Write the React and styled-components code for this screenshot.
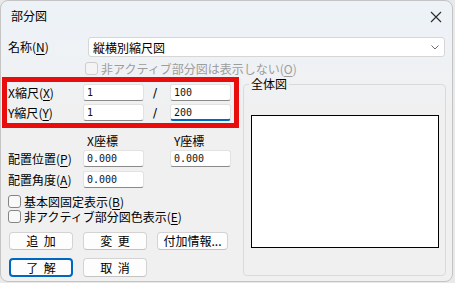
import React from "react";
import styled, { createGlobalStyle, css } from "styled-components";

const Global = createGlobalStyle`
  html, body { margin: 0; padding: 0; background: #e9e9e9; }
  body { font-family: "Noto Sans CJK JP", "Noto Sans", sans-serif; font-size: 12px; color: #000; }
  * { box-sizing: border-box; }
`;

const Dialog = styled.div`
  width: 453px;
  height: 282px;
  border: 1px solid #c4c4c4;
  border-radius: 8px;
  overflow: hidden;
  background: linear-gradient(180deg, #edf2f8 0px, #eff2f5 60px, #f0f0f0 110px);
  display: flex;
  flex-direction: column;
`;

const TitleBar = styled.div`
  height: 29px;
  display: flex;
  align-items: center;
  justify-content: space-between;
  padding: 0 10px 0 10px;
`;

const Title = styled.div`
  font-size: 12px;
  line-height: 14px;
  padding-top: 1px;
`;

const CloseIcon = styled.svg`
  width: 12px;
  height: 12px;
  margin-top: 2px;
`;

const Body = styled.div`
  flex: 1;
  padding: 7px 0 0 1px;
  display: flex;
  flex-direction: column;
`;

const NameRow = styled.div`
  display: grid;
  grid-template-columns: 80px 1fr;
  align-items: center;
  padding: 0 7px 0 6px;
  height: 20px;
`;

const Label = styled.span`
  font-size: 12px;
  line-height: 14px;
  white-space: nowrap;
  color: ${(p) => (p.$disabled ? "#9d9d9d" : "#000")};
  u { text-decoration-thickness: 1px; text-underline-offset: 2px; }
`;

const Combo = styled.div`
  height: 20px;
  background: #fff;
  border: 1px solid #d6d6d6;
  border-radius: 3px;
  display: flex;
  align-items: center;
  justify-content: space-between;
  padding: 0 5px 0 4px;
  font-size: 12px;
`;

const Chevron = styled.svg`
  width: 8px;
  height: 5px;
`;

const CheckRow = styled.label`
  display: flex;
  align-items: center;
  gap: 3px;
  height: 15px;
  margin: ${(p) => p.$margin || "0"};
`;

const Box = styled.span`
  width: 13px;
  height: 13px;
  border-radius: 3px;
  border: 1px solid ${(p) => (p.$disabled ? "#cccccc" : "#858585")};
  background: ${(p) => (p.$disabled ? "#f4f4f4" : "#f8f8f8")};
  flex: none;
`;

const Main = styled.div`
  display: flex;
  gap: 4px;
  margin-top: 1px;
`;

const LeftCol = styled.div`
  width: 237px;
  display: flex;
  flex-direction: column;
`;

const FieldGrid = styled.div`
  display: grid;
  grid-template-columns: 75px 61px 26px 61px;
  grid-auto-rows: 17px;
  row-gap: ${(p) => p.$gap || "3px"};
  align-items: center;
`;

const RedFrame = styled.div`
  border: 5px solid #e80c0c;
  padding: 2px 3px 2px 1px;
  height: 51px;
`;

const Plain = styled.div`
  padding-left: 6px;
  margin-top: ${(p) => p.$mt || "0"};
`;

const Slash = styled.span`
  text-align: center;
  font-size: 12px;
  line-height: 14px;
  font-family: "DejaVu Sans", sans-serif;
  transform: translateX(-2px);
`;

const Input = styled.div`
  height: 17px;
  background: #fff;
  border: 1px solid #e2e2e2;
  border-bottom: ${(p) => (p.$focus ? "2px solid #0067c0" : "1px solid #8a8a8a")};
  border-radius: 3px;
  font-family: "DejaVu Sans Mono", "Liberation Mono", monospace;
  font-size: 10px;
  line-height: 15px;
  padding-left: 3px;
  color: #111;
`;

const HeadRow = styled.div`
  display: grid;
  grid-template-columns: 75px 87px 61px;
  height: 16px;
  align-items: center;
  padding-left: 8px;
  margin-top: 5px;
  span { padding-left: 2px; }
`;

const Checks = styled.div`
  display: flex;
  flex-direction: column;
  padding-left: 6px;
  margin-top: 6px;
`;

const ButtonRow = styled.div`
  display: flex;
  gap: 10px;
  padding-left: 7px;
  margin-top: ${(p) => p.$mt};
`;

const Button = styled.div`
  width: ${(p) => p.$w || 64}px;
  height: ${(p) => p.$h || 18}px;
  background: #fdfdfd;
  border: 1px solid #d3d3d3;
  border-bottom-color: #c3c3c3;
  border-radius: 4px;
  display: flex;
  align-items: center;
  justify-content: center;
  font-size: 12px;
  line-height: 14px;
  word-spacing: 3px;
  white-space: pre;
  ${(p) =>
    p.$focus &&
    css`
      border: 2px solid #0067c0;
      border-radius: 4px;
    `}
`;

const Group = styled.fieldset`
  width: 203px;
  height: 199px;
  margin: 0;
  padding: 0 0 0 7px;
  border: 1px solid #dadada;
  border-radius: 4px;
  min-width: 0;
`;

const Legend = styled.legend`
  padding: 0 2px;
  margin-left: -2px;
  font-size: 12px;
  line-height: 14px;
`;

const Preview = styled.div`
  width: 188px;
  height: 133px;
  margin-top: 24px;
  background: #fff;
  border: 1px solid #000;
`;

const Acc = ({ k }) => (
  <>
    (<u>{k}</u>)
  </>
);

export default function App() {
  return (
    <>
      <Global />
      <Dialog>
        <TitleBar>
          <Title>部分図</Title>
          <CloseIcon viewBox="0 0 12 12">
            <path d="M1 1 L11 11 M11 1 L1 11" stroke="#2a2a2a" strokeWidth="1.1" fill="none" />
          </CloseIcon>
        </TitleBar>
        <Body>
          <NameRow>
            <Label>
              名称<Acc k="N" />
            </Label>
            <Combo>
              <span>縦横別縮尺図</span>
              <Chevron viewBox="0 0 8 5">
                <path d="M0.5 0.5 L4 4 L7.5 0.5" stroke="#6a6a6a" strokeWidth="1" fill="none" />
              </Chevron>
            </Combo>
          </NameRow>
          <CheckRow $margin="4px 0 0 83px">
            <Box $disabled />
            <Label $disabled>
              非アクティブ部分図は表示しない<Acc k="O" />
            </Label>
          </CheckRow>
          <Main>
            <LeftCol>
              <RedFrame>
                <FieldGrid>
                  <Label>
                    X縮尺<Acc k="X" />
                  </Label>
                  <Input>1</Input>
                  <Slash>/</Slash>
                  <Input>100</Input>
                  <Label>
                    Y縮尺<Acc k="Y" />
                  </Label>
                  <Input>1</Input>
                  <Slash>/</Slash>
                  <Input $focus>200</Input>
                </FieldGrid>
              </RedFrame>
              <HeadRow>
                <span />
                <Label as="span">X座標</Label>
                <Label as="span">Y座標</Label>
              </HeadRow>
              <Plain $mt="1px">
                <FieldGrid $gap="4px">
                  <Label>
                    配置位置<Acc k="P" />
                  </Label>
                  <Input>0.000</Input>
                  <span />
                  <Input>0.000</Input>
                  <Label>
                    配置角度<Acc k="A" />
                  </Label>
                  <Input>0.000</Input>
                </FieldGrid>
              </Plain>
              <Checks>
                <CheckRow>
                  <Box />
                  <Label>
                    基本図固定表示<Acc k="B" />
                  </Label>
                </CheckRow>
                <CheckRow>
                  <Box />
                  <Label>
                    非アクティブ部分図色表示<Acc k="E" />
                  </Label>
                </CheckRow>
              </Checks>
              <ButtonRow $mt="8px">
                <Button>追 加</Button>
                <Button>変 更</Button>
                <Button $w={71}>付加情報...</Button>
              </ButtonRow>
              <ButtonRow $mt="8px">
                <Button $focus $h={19}>了 解</Button>
                <Button $h={19}>取 消</Button>
              </ButtonRow>
            </LeftCol>
            <Group>
              <Legend>全体図</Legend>
              <Preview />
            </Group>
          </Main>
        </Body>
      </Dialog>
    </>
  );
}
